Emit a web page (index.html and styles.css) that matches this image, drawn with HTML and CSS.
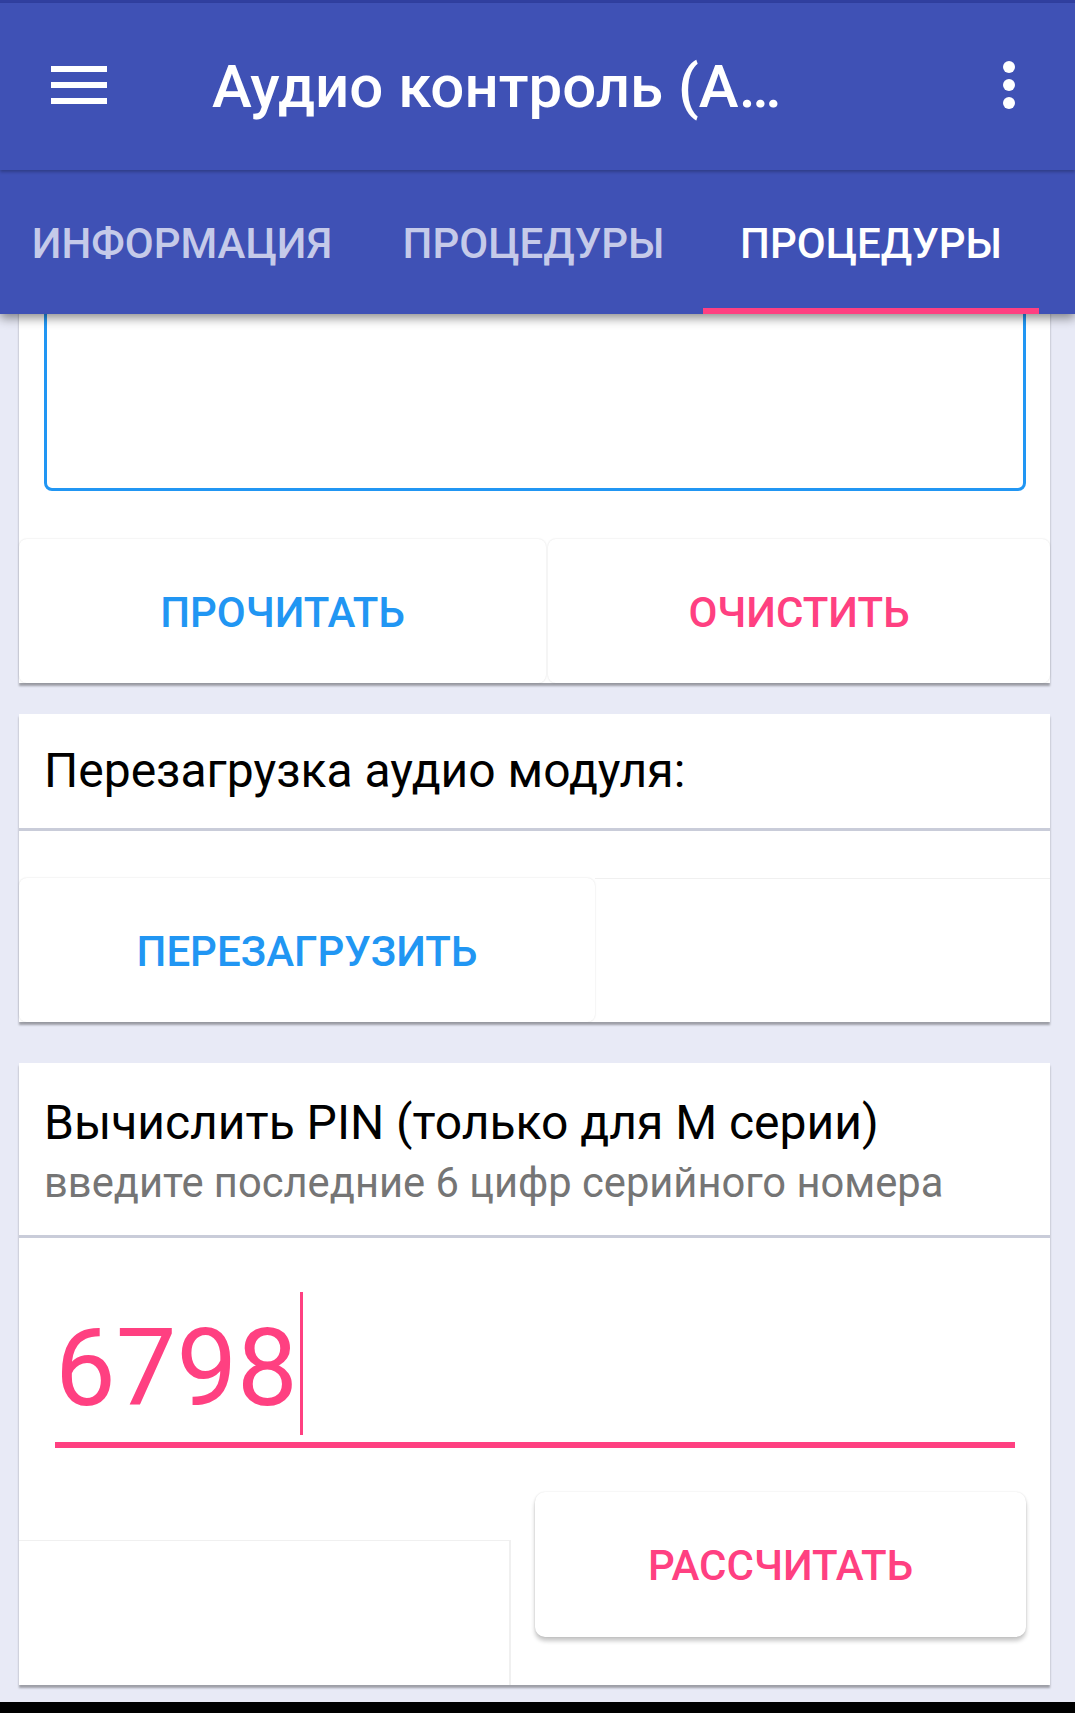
FILE: index.html
```html
<!DOCTYPE html>
<html lang="ru">
<head>
    <meta charset="UTF-8">
    <meta name="viewport" content="width=device-width, initial-scale=1.0">
    <title>Аудио контроль</title>
    <link rel="stylesheet" href="styles.css">
</head>
<body>

    <div class="status"></div>

    <header class="toolbar">
        <svg class="menu-icon" width="56" height="38" viewBox="0 0 56 38">
            <rect x="0" y="0" width="56" height="6" fill="#fff"/>
            <rect x="0" y="16" width="56" height="6" fill="#fff"/>
            <rect x="0" y="32" width="56" height="6" fill="#fff"/>
        </svg>
        <h1 class="title">Аудио контроль (А…</h1>
        <svg class="more-icon" width="12" height="48" viewBox="0 0 12 48">
            <circle cx="6" cy="6" r="6" fill="#fff"/>
            <circle cx="6" cy="24" r="6" fill="#fff"/>
            <circle cx="6" cy="42" r="6" fill="#fff"/>
        </svg>
    </header>

    <nav class="tabs">
        <div class="tab tab-info">Информация</div>
        <div class="tab tab-proc">Процедуры</div>
        <div class="tab tab-proc2 active">Процедуры</div>
    </nav>

    <main class="content">
        <div class="scroll">

            <section class="card card-log">
                <div class="log-box"></div>
                <div class="btn-row">
                    <button class="btn blue btn-half">Прочитать</button>
                    <button class="btn pink">Очистить</button>
                </div>
            </section>

            <section class="card card-reset">
                <div class="card-head">
                    <div class="card-title">Перезагрузка аудио модуля:</div>
                </div>
                <div class="btn-row reset-row">
                    <button class="btn blue btn-reset">Перезагрузить</button>
                    <div class="btn-empty"></div>
                </div>
            </section>

            <section class="card card-pin">
                <div class="card-head pin-head">
                    <div class="card-title">Вычислить PIN (только для М серии)</div>
                    <div class="card-sub">введите последние 6 цифр серийного номера</div>
                </div>
                <div class="pin-field">
                    <span class="pin-value">6798</span><span class="caret"></span>
                </div>
                <div class="pin-row">
                    <div class="pin-blank"></div>
                    <button class="btn pink btn-calc">Рассчитать</button>
                </div>
            </section>

        </div>
    </main>

    <div class="navbar"></div>

</body>
</html>
```

FILE: styles.css
```css
body {
    margin: 0;
    width: 1075px;
    height: 1713px;
    overflow: hidden;
    font-family: Roboto, "Noto Sans", sans-serif;
    background: #e8eaf6;
}

.status {
    height: 3px;
    background: #303f9f;
}

.toolbar {
    position: relative;
    z-index: 3;
    height: 167px;
    display: flex;
    align-items: center;
    background: #3f51b5;
    box-shadow: 0 2px 3px rgba(0, 0, 0, 0.25);
}
.menu-icon {
    margin-left: 51px;
    margin-top: -3px;
}
.title {
    margin: 0 0 0 105px;
    color: #fff;
    font-size: 60px;
    font-weight: 500;
    line-height: 1;
    white-space: nowrap;
}
.more-icon {
    margin-left: auto;
    margin-right: 60px;
    margin-top: -3px;
}

.tabs {
    position: relative;
    z-index: 2;
    height: 144px;
    display: flex;
    background: #3f51b5;
    box-shadow: 0 4px 10px rgba(0, 0, 0, 0.45);
}
.tab {
    box-sizing: border-box;
    display: flex;
    align-items: center;
    justify-content: center;
    font-size: 42px;
    font-weight: 500;
    text-transform: uppercase;
    color: #c5cae9;
    border-bottom: 6px solid transparent;
    padding-top: 8px;
}
.tab-info { width: 364px; }
.tab-proc { width: 339px; }
.tab-proc2 { width: 336px; }
.tab.active {
    color: #fff;
    border-bottom-color: #ff4081;
}

.content {
    height: 1388px;
    overflow: hidden;
    padding: 0 25px 0 19px;
}
.scroll {
    margin-top: -100px;
}

.card {
    background: #fff;
    box-shadow: 0 3px 2px rgba(0, 0, 0, 0.32);
}
.card-log {
    padding-top: 20px;
}
.card-reset {
    margin-top: 31px;
}
.card-pin {
    margin-top: 41px;
}

.log-box {
    box-sizing: border-box;
    height: 257px;
    margin: 0 24px 48px 25px;
    border: 3px solid #2196f3;
    border-radius: 8px;
}

.btn-row {
    display: flex;
    gap: 2px;
}
.btn {
    flex: 1;
    height: 144px;
    border: none;
    border-radius: 8px;
    background: #fff;
    box-shadow: 0 0 2px rgba(0, 0, 0, 0.14);
    font-family: inherit;
    font-size: 42px;
    font-weight: 500;
    text-transform: uppercase;
    padding: 0;
    padding-top: 2px;
}
.btn.blue { color: #2196f3; }
.btn.pink { color: #ff4081; }
.btn.btn-half { flex: 0 0 527px; }

.card-head {
    height: 114px;
    display: flex;
    align-items: center;
    padding-left: 25px;
    border-bottom: 3px solid #c9ccd9;
}
.card-title {
    font-size: 48px;
    line-height: 56px;
    color: #000;
}
.reset-row {
    margin-top: 47px;
    gap: 0;
}
.btn.btn-reset { flex: 0 0 576px; }
.btn-empty {
    flex: 1;
    height: 144px;
    border-top: 1px solid #f0f0f0;
    box-sizing: border-box;
}

.pin-head {
    height: auto;
    display: block;
    padding-top: 32px;
    padding-bottom: 27px;
}
.card-sub {
    margin-top: 7px;
    font-size: 41.7px;
    line-height: 50px;
    color: #757575;
}

.pin-field {
    margin: 54px 35px 0 36px;
    padding: 0 0 7px 0;
    border-bottom: 6px solid #ff4081;
    font-size: 108px;
    line-height: 1;
    color: #ff4081;
}
.caret {
    display: inline-block;
    width: 3px;
    height: 143px;
    margin-left: 2px;
    vertical-align: -30px;
    background: #ff4081;
}

.pin-row {
    display: flex;
    align-items: flex-start;
    margin-top: 44px;
}
.pin-blank {
    width: 492px;
    height: 145px;
    margin-top: 48px;
    box-sizing: border-box;
    border-top: 1px solid #f0f0f0;
    border-right: 2px solid #f0f0f0;
}
.btn.btn-calc {
    flex: 0 0 491px;
    height: 145px;
    margin-left: 24px;
    border-radius: 10px;
    box-shadow: 0 0 2px rgba(0, 0, 0, 0.12), 0 4px 4px rgba(0, 0, 0, 0.22);
}

.navbar {
    height: 11px;
    background: #000;
}
```
